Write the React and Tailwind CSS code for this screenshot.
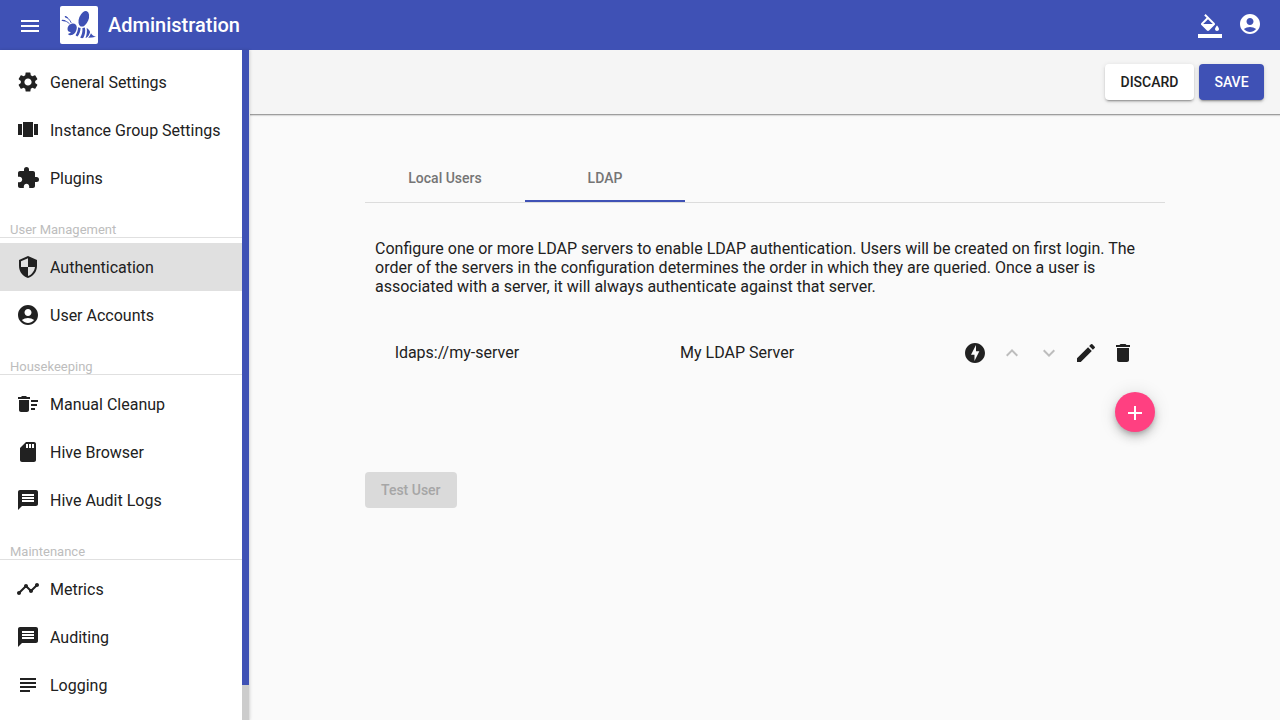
import React from "react";
import {
  MdAccountCircle,
  MdAdd,
  MdDelete,
  MdDeleteSweep,
  MdEdit,
  MdExpandLess,
  MdExpandMore,
  MdExtension,
  MdMenu,
  MdMessage,
  MdOfflineBolt,
  MdSdStorage,
  MdSecurity,
  MdSettings,
  MdSubject,
  MdTimeline,
} from "react-icons/md";

function CarouselIcon({ className }) {
  return (
    <svg viewBox="0 0 24 24" fill="currentColor" className={className} aria-hidden="true">
      <path d="M7 19h10V4H7v15zm-5-2h4V6H2v11zM18 6v11h4V6h-4z" />
    </svg>
  );
}

function ColorFillIcon({ className }) {
  return (
    <svg viewBox="0 0 24 24" fill="currentColor" className={className} aria-hidden="true">
      <path d="M16.56 8.94L7.62 0 6.21 1.41l2.38 2.38-5.15 5.15c-.59.59-.59 1.54 0 2.12l5.5 5.5c.29.29.68.44 1.06.44s.77-.15 1.06-.44l5.5-5.5c.59-.58.59-1.53 0-2.12zM5.21 10L10 5.21 14.79 10H5.21zM19 11.5s-2 2.17-2 3.5c0 1.1.9 2 2 2s2-.9 2-2c0-1.33-2-3.5-2-3.5zM0 20h24v4H0z" />
    </svg>
  );
}

function BeeLogo() {
  return (
    <svg viewBox="0 0 38 38" className="size-[38px] rounded-xs bg-white text-[#3f51b5]" aria-hidden="true">
      <g fill="currentColor">
        <ellipse cx="23.800" cy="12.800" rx="4.700" ry="8.200" transform="rotate(22 23.800 12.800)" />
        <path d="M11.500 17.700c2.800-.8 5.200.700 5.300 3.500.1 3.500-2 7.200-5.200 7.900-1.700.4-3-.2-3.800-1.400 1.400 0 2.500-.6 3-1.800-1.900.2-3.300-.9-3.300-2.900 0-2.400 1.500-4.600 4-5.300z" />
        <path d="M18.100 21.200c.8.500 1.600.700 2.500.700-.1 3.100-1.200 6.300-3.100 8.700-.8-.2-1.400-.6-1.900-1.300 1.500-2.300 2.400-5.100 2.500-8.100z" />
        <path d="M22.400 22c.9.100 1.700-.1 2.500-.4.8 3.500.2 7.400-1.700 10.500-1.100.2-2.200.1-3-.5 1.700-2.700 2.500-6 2.200-9.600z" />
        <path d="M26.700 22c1.600.9 2.800 2.300 3.400 3.900-.5 2.200-1.700 4.300-3.300 5.700l-1.300.4c1.200-3 1.700-6.400 1.200-10z" />
        <path d="M31 27.200c1 1.800 2.600 2.900 5 3.500-2.500.6-5.100 1-7.800 1.100 1.200-1.300 2.200-2.900 2.800-4.600z" />
      </g>
      <g fill="none" stroke="currentColor" strokeLinecap="round" strokeWidth="0.9">
        <path d="M2.500 14.500c2.700.1 5 1.200 6.900 3.200" />
        <path d="M5.500 10.700c2.500 1.100 4.500 3.200 5.600 5.900" />
      </g>
      <path
        d="M2.300 14.400l2.400.3M5.400 10.600l1.800 1.200"
        fill="none"
        stroke="currentColor"
        strokeLinecap="round"
        strokeWidth="1.300"
      />
    </svg>
  );
}

const sections = [
  {
    items: [
      { label: "General Settings", icon: MdSettings },
      { label: "Instance Group Settings", icon: CarouselIcon },
      { label: "Plugins", icon: MdExtension },
    ],
  },
  {
    title: "User Management",
    items: [
      { label: "Authentication", icon: MdSecurity, active: true },
      { label: "User Accounts", icon: MdAccountCircle },
    ],
  },
  {
    title: "Housekeeping",
    items: [
      { label: "Manual Cleanup", icon: MdDeleteSweep },
      { label: "Hive Browser", icon: MdSdStorage },
      { label: "Hive Audit Logs", icon: MdMessage },
    ],
  },
  {
    title: "Maintenance",
    items: [
      { label: "Metrics", icon: MdTimeline },
      { label: "Auditing", icon: MdMessage },
      { label: "Logging", icon: MdSubject },
    ],
  },
];

function Sidebar() {
  return (
    <aside className="z-10 flex shrink-0 border-r border-[#e0e0e0] bg-white shadow-[0_0_3px_rgba(0,0,0,0.15)]">
      <nav className="w-[242px] overflow-hidden pt-2">
        {sections.map(({ title, items }) => (
          <section key={items[0].label}>
            {title && (
              <h2 className="mb-[5px] flex h-9 items-end border-b border-[#e0e0e0] px-[10px] text-[13px] leading-[15px] text-[#bdbdbd]">
                {title}
              </h2>
            )}
            <ul>
              {items.map(({ label, icon: Icon, active }) => (
                <li key={label}>
                  <a
                    href="#"
                    aria-current={active ? "page" : undefined}
                    className={
                      active
                        ? "flex h-12 items-center gap-[10px] bg-[#e0e0e0] px-4"
                        : "flex h-12 items-center gap-[10px] px-4"
                    }
                  >
                    <Icon className="size-6 shrink-0" />
                    <span className="pt-[2px] leading-6 whitespace-nowrap">{label}</span>
                  </a>
                </li>
              ))}
            </ul>
          </section>
        ))}
      </nav>
      <div className="w-[7px] bg-[#cccccc]">
        <div className="h-[94.8%] bg-[#3f51b5]" />
      </div>
    </aside>
  );
}

const raised =
  "shadow-[0_3px_1px_-2px_rgba(0,0,0,0.2),0_2px_2px_0_rgba(0,0,0,0.14),0_1px_5px_0_rgba(0,0,0,0.12)]";

function IconButton({ label, icon: Icon, disabled }) {
  return (
    <button type="button" aria-label={label} disabled={disabled} className="block disabled:text-[#bdbdbd]">
      <Icon className="size-6" />
    </button>
  );
}

export default function App() {
  return (
    <div className="flex h-screen flex-col overflow-hidden bg-[#fafafa] font-['Roboto',sans-serif] text-base text-[#212121]">
      <header className="flex h-[50px] shrink-0 items-center bg-[#3f51b5] px-[18px] text-white">
        <button type="button" aria-label="Menu" className="mr-[18px] pt-[2px]">
          <MdMenu className="size-6" />
        </button>
        <BeeLogo />
        <h1 className="ml-[10px] text-xl font-medium">Administration</h1>
        <div className="ml-auto flex items-center gap-4">
          <button type="button" aria-label="Theme" className="pt-[2px]">
            <ColorFillIcon className="size-6" />
          </button>
          <button type="button" aria-label="Account" className="pb-[2px]">
            <MdAccountCircle className="size-6" />
          </button>
        </div>
      </header>

      <div className="flex min-h-0 flex-1">
        <Sidebar />
        <main className="min-w-0 flex-1">
          <div className="flex h-16 items-center justify-end gap-[5px] bg-[#f5f5f5] px-4 text-sm font-medium shadow-[0_1px_0_#9e9e9e,0_2px_1px_rgba(0,0,0,0.12)]">
            <button type="button" className={`h-9 w-[89px] rounded-sm bg-white ${raised}`}>
              DISCARD
            </button>
            <button type="button" className={`h-9 w-[65px] rounded-sm bg-[#3f51b5] text-white ${raised}`}>
              SAVE
            </button>
          </div>

          <div className="mx-auto mt-10 max-w-[800px]">
            <div role="tablist" className="flex border-b border-[#dcdcdc] text-sm font-medium text-[#757575]">
              <button type="button" role="tab" aria-selected="false" className="h-12 w-40">
                Local Users
              </button>
              <button
                type="button"
                role="tab"
                aria-selected="true"
                className="h-12 w-40 border-b-2 border-[#3f51b5] pt-[2px]"
              >
                LDAP
              </button>
            </div>

            <div className="px-[10px] pt-9">
              <p className="leading-[19px]">
                Configure one or more LDAP servers to enable LDAP authentication. Users will be created on first login.
                The order of the servers in the configuration determines the order in which they are queried. Once a
                user is associated with a server, it will always authenticate against that server.
              </p>

              <div className="mt-[33px] px-5">
                <table className="w-full table-fixed" aria-label="LDAP servers">
                  <tbody>
                    <tr className="h-12">
                      <td className="w-[285px]">ldaps://my-server</td>
                      <td>My LDAP Server</td>
                      <td className="w-[172px]">
                        <div className="flex items-center justify-between">
                          <IconButton label="Check connection" icon={MdOfflineBolt} />
                          <IconButton label="Move up" icon={MdExpandLess} disabled />
                          <IconButton label="Move down" icon={MdExpandMore} disabled />
                          <IconButton label="Edit" icon={MdEdit} />
                          <IconButton label="Delete" icon={MdDelete} />
                        </div>
                      </td>
                    </tr>
                  </tbody>
                </table>
              </div>

              <div className="mt-[15px] flex justify-end">
                <button
                  type="button"
                  aria-label="Add server"
                  className="flex size-10 items-center justify-center rounded-full bg-[#ff4081] pt-[2px] text-white shadow-[0_3px_5px_-1px_rgba(0,0,0,0.2),0_6px_10px_0_rgba(0,0,0,0.14),0_1px_18px_0_rgba(0,0,0,0.12)]"
                >
                  <MdAdd className="size-6" />
                </button>
              </div>
            </div>

            <button
              type="button"
              disabled
              className="mt-10 h-9 rounded-sm bg-[#dadada] px-4 text-sm font-medium text-[#a6a6a6]"
            >
              Test User
            </button>
          </div>
        </main>
      </div>
    </div>
  );
}
